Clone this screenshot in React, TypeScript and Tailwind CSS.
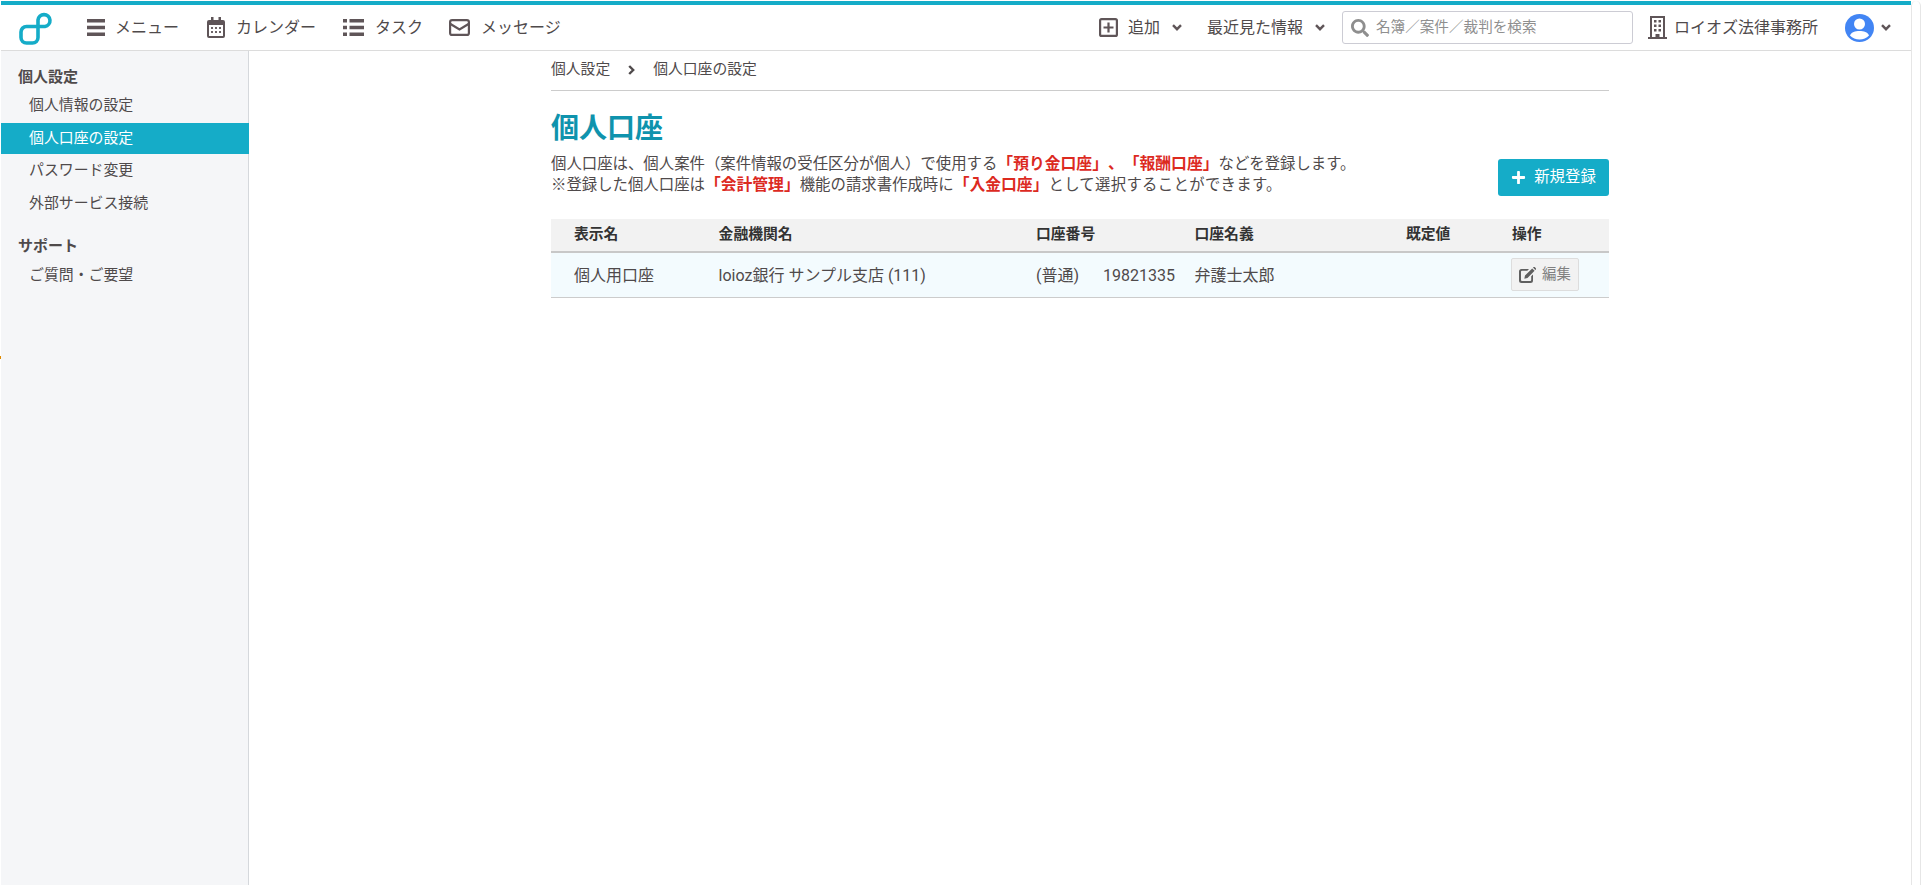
import React from 'react';
import { FaPlus, FaSearch } from 'react-icons/fa';

function Logo() {
  return (
    <svg viewBox="0 0 34 34" className="h-[34px] w-[34px]" fill="none" stroke="#15acc8" strokeWidth="3.6">
      <path d="M19 15.5V26.5a5.5 5.5 0 0 1-5.5 5.5H7.5A5.5 5.5 0 0 1 2 26.5V21a5.5 5.5 0 0 1 5.5-5.5H26a6 6 0 1 0-7-6.5v6.5" />
    </svg>
  );
}

function BarsIcon() {
  return (
    <svg viewBox="0 0 18 17" className="h-[17px] w-[18px]" fill="#5f5558">
      <path d="M0 0h18v3.500H0zM0 6.700h18v3.500H0zM0 13.400h18v3.500H0z" />
    </svg>
  );
}

function CalendarIcon() {
  return (
    <svg viewBox="0 0 18 21" className="h-[21px] w-[18px]">
      <path d="M4 0h2.500v3h5V0H14v3h2a2 2 0 0 1 2 2v14a2 2 0 0 1-2 2H2a2 2 0 0 1-2-2V5a2 2 0 0 1 2-2h2z" fill="#5f5558" />
      <rect x="2" y="8" width="14" height="11" fill="#fff" />
      <path d="M4 10h2v2H4zM8 10h2v2H8zM12 10h2v2h-2zM4 14h2v2H4zM8 14h2v2H8zM12 14h2v2h-2z" fill="#6e6568" />
    </svg>
  );
}

function ListIcon() {
  return (
    <svg viewBox="0 0 21 17" className="h-[17px] w-[21px]" fill="#5f5558">
      <path d="M0 0h4v3.500H0zM0 6.700h4v3.500H0zM0 13.400h4v3.500H0zM6.500 0H21v3.500H6.500zM6.500 6.700H21v3.500H6.500zM6.500 13.400H21v3.500H6.500z" />
    </svg>
  );
}

function MailIcon() {
  return (
    <svg viewBox="0 0 21 17" className="h-[17px] w-[21px]" fill="none" stroke="#5f5558" strokeWidth="2.200">
      <rect x="1.100" y="1.100" width="18.800" height="14.800" rx="2" />
      <path d="M1.500 5l9 5.500 9-5.500" />
    </svg>
  );
}

function PlusBox() {
  return (
    <svg viewBox="0 0 19 19" className="h-[19px] w-[19px]" fill="none" stroke="#5f5558" strokeWidth="2.200">
      <rect x="1.100" y="1.100" width="16.800" height="16.800" rx="1.500" />
      <path d="M9.500 4.500v10M4.500 9.500h10" />
    </svg>
  );
}

function EditIcon() {
  return (
    <svg viewBox="0 0 17 16" className="h-[16px] w-[17px]" fill="#5f5f5f">
      <path d="M2.500 2H10L8.300 3.800H3a1 1 0 0 0-1 1V13a1 1 0 0 0 1 1h8.200a1 1 0 0 0 1-1V9.300L14 7.500v6A2.500 2.500 0 0 1 11.500 16h-9A2.500 2.500 0 0 1 0 13.500v-9A2.500 2.500 0 0 1 2.500 2z" />
      <path d="M13.200 1.400l2.400 2.400L8.500 11l-3.200.7.700-3.200zM14 .6l.6-.5a.8.800 0 0 1 1.100 0l1.200 1.200a.8.800 0 0 1 0 1.100l-.6.600z" />
    </svg>
  );
}

function ChevronDown() {
  return (
    <svg viewBox="0 0 10 7" className="h-[7px] w-[10px]" fill="none" stroke="#5f5558" strokeWidth="2.400">
      <path d="M1 1.200l4 4 4-4" />
    </svg>
  );
}

function ChevronRight() {
  return (
    <svg viewBox="0 0 7 10" className="h-[10px] w-[7px]" fill="none" stroke="#4f4a4b" strokeWidth="2.400">
      <path d="M1.200 1l4 4-4 4" />
    </svg>
  );
}

function Building() {
  return (
    <svg viewBox="0 0 19 23" className="h-[23px] w-[19px]" fill="#5f5558">
      <path d="M0 21h19v2H0z" />
      <path d="M2 0h15v22h-2V2H4v20H2z" />
      <path d="M6 4h2.500v2.500H6zM10.500 4H13v2.500h-2.500zM6 8.500h2.500V11H6zM10.500 8.500H13V11h-2.500zM6 13h2.500v2.500H6zM10.500 13H13v2.500h-2.500zM7.500 18h4v4h-4z" />
    </svg>
  );
}

function Avatar() {
  return (
    <svg viewBox="0 0 29 28" className="h-[28px] w-[29px]">
      <ellipse cx="14.500" cy="14" rx="14.500" ry="14" fill="#4285f4" />
      <circle cx="14.500" cy="10" r="5.500" fill="#fff" />
      <path d="M5 21.500c1.500-3.500 5-4.500 9.500-4.500s8 1 9.500 4.500c-2.400 2.800-5.800 4-9.500 4s-7.100-1.200-9.500-4z" fill="#fff" />
    </svg>
  );
}

function SideItem({ label, active }: { label: string; active?: boolean }) {
  return (
    <a
      href="#"
      className={`mb-[1.7px] flex h-[31px] items-center pb-px pl-[28px] text-[14.9px] ${
        active ? '-mr-px bg-[#15acc8] text-white' : 'text-[#4f4a4b]'
      }`}
    >
      {label}
    </a>
  );
}

const Red = ({ children }: { children: React.ReactNode }) => (
  <span className="text-[15.8px] font-bold leading-none text-[#dc2a1f]">{children}</span>
);

export default function App() {
  return (
    <div className="relative flex h-screen w-full overflow-hidden bg-white font-[Roboto,'Noto_Sans_CJK_JP',sans-serif] text-[#4f4a4b] [text-spacing-trim:space-all]">
      <div className="flex min-w-0 flex-1 flex-col pl-px">
        {/* Top bar */}
        <div className="mt-px h-[4px] bg-[#15acc8]" />
        <header className="flex h-[46px] items-center border-b border-[#dcdcdc] text-[16px]">
          <a href="#" className="ml-[18px] flex">
            <Logo />
          </a>
          <nav className="ml-[34px] flex items-center">
            <a href="#" className="flex items-center gap-[10px]">
              <BarsIcon />
              メニュー
            </a>
            <a href="#" className="ml-[28px] flex items-center gap-[11px]">
              <CalendarIcon />
              カレンダー
            </a>
            <a href="#" className="ml-[27px] flex items-center gap-[11px]">
              <ListIcon />
              タスク
            </a>
            <a href="#" className="ml-[26px] flex items-center gap-[11px]">
              <MailIcon />
              メッセージ
            </a>
          </nav>
          <div className="ml-auto flex items-center">
            <a href="#" className="flex items-center">
              <PlusBox />
              <span className="ml-[10px]">追加</span>
              <span className="ml-[12px] flex">
                <ChevronDown />
              </span>
            </a>
            <a href="#" className="ml-[25px] flex items-center">
              最近見た情報
              <span className="ml-[12px] flex">
                <ChevronDown />
              </span>
            </a>
            <label className="ml-[17px] flex h-[33px] w-[291px] items-center rounded-[3px] border border-[#ccccd4] pl-[8px]">
              <FaSearch className="h-[18px] w-[18px] text-[#8e8e8e]" />
              <input
                placeholder="名簿／案件／裁判を検索"
                className="ml-[7px] min-w-0 flex-1 text-[14.6px] outline-none placeholder:text-[#8f8f8f]"
              />
            </label>
            <a href="#" className="ml-[15px] flex items-center">
              <Building />
              <span className="ml-[7px]">ロイオズ法律事務所</span>
            </a>
            <a href="#" className="ml-[27px] mr-[20px] flex items-center">
              <Avatar />
              <span className="ml-[7px] flex">
                <ChevronDown />
              </span>
            </a>
          </div>
        </header>

        <div className="flex min-h-0 flex-1">
          {/* Sidebar */}
          <aside className="w-[248px] shrink-0 border-r border-[#d5d8dc] bg-[#f5f6f8] pt-[13px]">
            <h3 className="flex h-[26px] items-center pl-[17px] text-[15px] font-bold">個人設定</h3>
            <SideItem label="個人情報の設定" />
            <SideItem label="個人口座の設定" active />
            <SideItem label="パスワード変更" />
            <SideItem label="外部サービス接続" />
            <h3 className="mb-px mt-[14.5px] flex h-[26px] items-center pl-[17px] text-[15px] font-bold">サポート</h3>
            <SideItem label="ご質問・ご要望" />
          </aside>

          {/* Main */}
          <main className="ml-[302px] w-[1058px] text-[15.4px]">
            <div className="flex h-[40px] items-center border-b border-[#cccccc] pb-[2px] text-[14.8px]">
              <a href="#">個人設定</a>
              <span className="ml-[18px] flex">
                <ChevronRight />
              </span>
              <span className="ml-[18px]">個人口座の設定</span>
            </div>

            <div className="mt-[16px] flex items-end justify-between">
              <div>
                <h1 className="mt-[2px] h-[40px] text-[28px] font-bold leading-[40px] text-[#0f93ad]">個人口座</h1>
                <p className="mt-[5px] leading-[21px]">
                  個人口座は、個人案件（案件情報の受任区分が個人）で使用する<Red>「預り金口座」、「報酬口座」</Red>
                  などを登録します。
                  <br />
                  ※登録した個人口座は<Red>「会計管理」</Red>機能の請求書作成時に<Red>「入金口座」</Red>
                  <span className="tracking-[0.3px]">として選択することができます。</span>
                </p>
              </div>
              <button className="flex h-[37px] w-[111px] items-center justify-center gap-[8px] rounded-[3px] bg-[#15acc8] text-[15.4px] text-white">
                <FaPlus className="h-[15px] w-[15px]" />
                新規登録
              </button>
            </div>

            {/* Table */}
            <div className="mt-[23px]">
              <div className="grid h-[34px] grid-cols-[144.600px_317.400px_158.500px_211.500px_106px_1fr] items-center border-b-2 border-[#c8c8c8] bg-[#f2f2f2] pb-px pl-[23px] text-[14.8px] font-bold text-[#333333]">
                <div>表示名</div>
                <div>金融機関名</div>
                <div>口座番号</div>
                <div>口座名義</div>
                <div>既定値</div>
                <div>操作</div>
              </div>
              <div className="grid h-[45px] grid-cols-[144.600px_317.400px_158.500px_211.500px_106px_1fr] items-center border-b border-[#cccccc] bg-[#f3fbfe] pl-[23px] pt-[2px] text-[16px]">
                <div>個人用口座</div>
                <div>loioz銀行 サンプル支店 (111)</div>
                <div className="flex">
                  <span className="w-[67px]">(普通)</span>
                  <span>19821335</span>
                </div>
                <div>弁護士太郎</div>
                <div />
                <div className="-ml-px pb-[3px]">
                  <button className="flex h-[33px] w-[68px] items-center justify-center gap-[6px] rounded-[2px] border border-[#dddddd] bg-[#f2f2f2] text-[14.4px] text-[#808080]">
                    <EditIcon />
                    編集
                  </button>
                </div>
              </div>
            </div>
          </main>
        </div>
      </div>

      {/* Scrollbar */}
      <div className="mt-px w-[10px] shrink-0 rounded-t-[5px] border-x border-[#e6e6e6] bg-white" />

      {/* Stray mark on left edge */}
      <div className="absolute left-0 top-[356px] h-[3px] w-px bg-[#e08a00]" />
    </div>
  );
}
